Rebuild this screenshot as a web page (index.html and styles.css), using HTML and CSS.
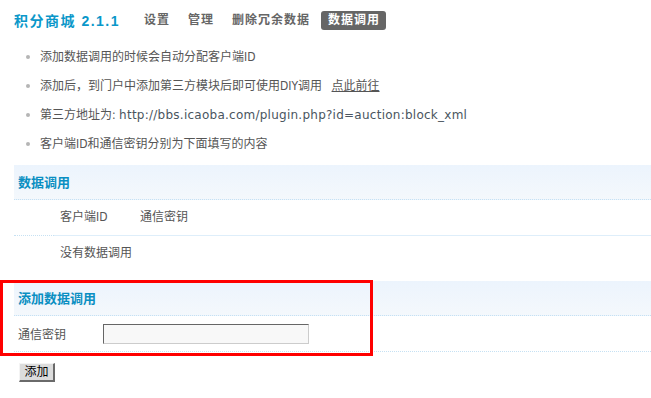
FILE: index.html
```html
<!DOCTYPE html>
<html lang="zh-CN">
<head>
<meta charset="utf-8">
<title>积分商城 数据调用</title>
<link rel="stylesheet" href="styles.css">
</head>
<body>
<div class="page">
  <div class="topbar">
    <h1 class="title">积分商城 2.1.1</h1>
    <nav class="nav">
      <a class="nav-item">设置</a>
      <a class="nav-item">管理</a>
      <a class="nav-item">删除冗余数据</a>
      <a class="nav-item active">数据调用</a>
    </nav>
  </div>
  <ul class="tips">
    <li>添加数据调用的时候会自动分配客户端ID</li>
    <li>添加后，到门户中添加第三方模块后即可使用DIY调用 <a class="link">点此前往</a></li>
    <li>第三方地址为: <span class="url">http://bbs.icaoba.com/plugin.php?id=auction:block_xml</span></li>
    <li>客户端ID和通信密钥分别为下面填写的内容</li>
  </ul>

  <div class="panel">
    <div class="panel-head">数据调用</div>
    <div class="grid-row">
      <div class="cell first"></div>
      <div class="cell c2">客户端ID</div>
      <div class="cell c3">通信密钥</div>
    </div>
    <div class="grid-row noborder">
      <div class="cell first"></div>
      <div class="cell span">没有数据调用</div>
    </div>
  </div>

  <div class="panel panel2">
    <div class="panel-head">添加数据调用</div>
    <div class="form-row">
      <label class="form-label">通信密钥</label>
      <input class="text-input" type="text">
    </div>
    <div class="mark"></div>
  </div>

  <button class="btn" type="button">添加</button>
</div>
</body>
</html>
```
FILE: styles.css
```css
html, body {
  margin: 0;
  padding: 0;
  background: #fff;
}
.page {
  position: relative;
  font-family: "DejaVu Sans Condensed", "DejaVu Sans", "Noto Sans CJK SC", sans-serif;
  font-size: 12px;
  color: #555;
}
.topbar {
  display: flex;
  align-items: center;
  height: 40px;
  padding-left: 14px;
}
.title {
  margin: 0;
  font-family: "Liberation Sans", "Noto Sans CJK SC", sans-serif;
  font-size: 14px;
  font-weight: bold;
  color: #0a97c9;
  letter-spacing: 1.5px;
  margin-right: 17px;
}
.nav {
  display: flex;
  gap: 5px;
}
.nav-item {
  display: block;
  padding: 0 6px 0 7px;
  height: 19px;
  line-height: 19px;
  font-weight: bold;
  letter-spacing: 1px;
  color: #666;
  border-radius: 3px;
}
.nav-item.active {
  background: #666;
  color: #fff;
}
.tips {
  list-style: none;
  margin: 3px 0 0 0;
  padding: 0 0 0 40px;
}
.tips li {
  position: relative;
  height: 29px;
  line-height: 29px;
  color: #555;
}
.tips li::before {
  content: "";
  position: absolute;
  left: -14px;
  top: 12px;
  width: 4px;
  height: 4px;
  border-radius: 50%;
  background: #b5b5b5;
}
.url {
  font-family: "DejaVu Sans", sans-serif;
  letter-spacing: 0.25px;
  color: #4a5560;
}
.link {
  color: #555;
  text-decoration: underline;
  margin-left: 6px;
}
.panel {
  margin: 6px 0 0 14px;
}
.panel2 {
  position: relative;
  margin-top: 9px;
}
.panel-head {
  height: 35px;
  line-height: 35px;
  box-sizing: border-box;
  padding-left: 4px;
  font-size: 13px;
  font-weight: bold;
  color: #0a8fc2;
  background: linear-gradient(#ecf4fd, #f4f8fc);
  border-bottom: 1px dotted #c6e1f3;
}
.grid-row {
  display: grid;
  grid-template-columns: 40px 80px 1fr;
  height: 36px;
  box-sizing: border-box;
}
.cell {
  line-height: 35px;
  padding-left: 6px;
  border-bottom: 1px solid #deeefa;
}
.cell.first {
  padding: 0;
  border-bottom: 1px dotted #c6e1f3;
}
.cell.span {
  grid-column: 2 / 4;
}
.grid-row.noborder .cell {
  border-bottom: none;
}
.form-row {
  display: flex;
  align-items: center;
  height: 36px;
  box-sizing: border-box;
  padding-left: 4px;
  border-bottom: 1px dotted #c6e1f3;
}
.form-label {
  width: 85px;
  color: #555;
}
.text-input {
  width: 206px;
  height: 20px;
  box-sizing: border-box;
  margin: 0;
  padding: 0;
  background: #f8f8f8;
  border-style: solid;
  border-width: 1px;
  border-color: #666 #ccc #ccc #666;
}
.mark {
  position: absolute;
  left: -14px;
  top: -1px;
  width: 373px;
  height: 76px;
  box-sizing: border-box;
  border: 3px solid #ff0000;
  pointer-events: none;
}
.btn {
  display: block;
  margin: 11px 0 0 19px;
  width: 36px;
  height: 19px;
  padding: 0;
  box-sizing: border-box;
  font-family: "Liberation Sans", "Noto Sans CJK SC", sans-serif;
  font-size: 12px;
  line-height: 15px;
  color: #000;
  background: #dcdcdc;
  border-style: solid;
  border-width: 1px 2px 2px 1px;
  border-color: #f4f4f4 #6a6a6a #6a6a6a #f4f4f4;
}
```
